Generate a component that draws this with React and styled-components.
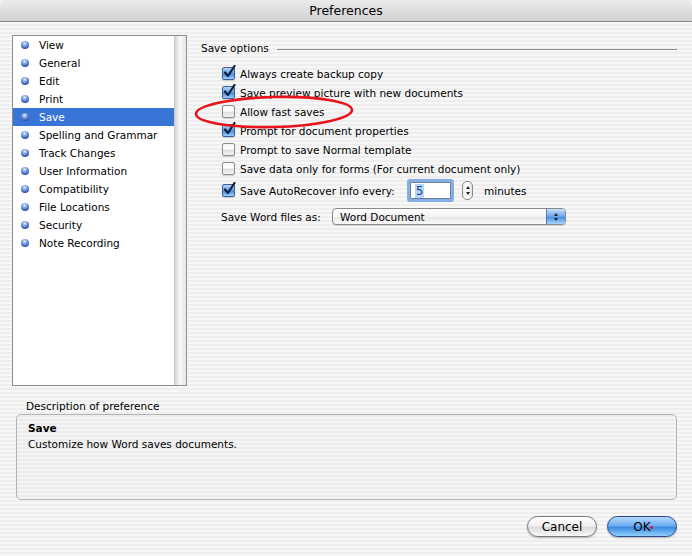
import styled, { createGlobalStyle } from 'styled-components';

const GlobalStyle = createGlobalStyle`
  html, body { margin:0; padding:0; }
  body {
    width:692px;
    height:556px;
    overflow:hidden;
    font-family:"DejaVu Sans", "Noto Sans", sans-serif;
    font-size:10.5px;
    color:#000;
  }
`;

const pinstripe = `repeating-linear-gradient(to bottom, #eeeeee 0px, #eeeeee 2px, #f7f7f7 2px, #f7f7f7 4px)`;

const Window = styled.div`
    width:692px;
    height:556px;
    display:flex;
    flex-direction:column;
    position:relative;
    background:${pinstripe};
`;

const TitleBar = styled.div`
    height:21px;
    border-bottom:1px solid #8a8a8a;
    border-radius:6px 6px 0 0;
    background:linear-gradient(#ebebeb, #d2d2d2);
    display:flex;
    align-items:center;
    justify-content:center;
    font-size:12.5px;
`;

const Body = styled.div`
    flex:1;
    display:flex;
    flex-direction:column;
    padding:13px 15px 0 12px;
`;

const Top = styled.div`
    display:flex;
    height:351px;
`;

const ListBox = styled.div`
    width:173px;
    height:349px;
    border:1px solid #8e8e8e;
    background:#fff;
    display:flex;
`;

const ListItems = styled.ul`
    list-style:none;
    margin:0;
    padding:0;
    flex:1;
`;

const ListItem = styled.li`
    height:18px;
    display:flex;
    align-items:center;
    padding-left:8px;
    gap:10px;
    background:${p => (p.$selected ? '#3875d7' : 'transparent')};
    color:${p => (p.$selected ? '#fff' : '#000')};
`;

const Bullet = styled.span`
    width:8px;
    height:8px;
    border-radius:50%;
    background:radial-gradient(circle at 45% 30%, #e0ebff 0, #7aa0e4 35%, #2b52a3 75%, #1a3470 100%);
`;

const ScrollTrack = styled.div`
    width:11px;
    border-left:1px solid #c9c9c9;
    background:linear-gradient(to right, #d4d4d4, #f9f9f9 45%, #e6e6e6);
`;

const Panel = styled.div`
    flex:1;
    margin-left:14px;
    display:flex;
    flex-direction:column;
`;

const SectionHead = styled.div`
    display:flex;
    align-items:center;
    gap:8px;
    height:14px;
    margin-top:6px;
`;

const Rule = styled.div`
    flex:1;
    height:1px;
    background:#8c8c8c;
    margin-top:3px;
`;

const Options = styled.div`
    display:flex;
    flex-direction:column;
    margin:9px 0 0 21px;
`;

const Row = styled.label`
    display:flex;
    align-items:center;
    gap:5px;
    height:${p => p.$h || 19}px;
`;

const Box = styled.span`
    width:11px;
    height:11px;
    border:1px solid ${p => (p.$checked ? '#3c5f95' : '#8d8d8d')};
    border-radius:2px;
    position:relative;
    background:${p =>
      p.$checked
        ? 'linear-gradient(#bcd8f8, #5a9be6 50%, #3d86dc 51%, #9fd0fb)'
        : 'linear-gradient(#f4f4f4, #ffffff 45%, #dedede 55%, #f4f4f4)'};
    box-shadow:0 1px 1px rgba(0,0,0,0.15);
    svg {
      position:absolute;
      left:0px;
      top:-3px;
    }
`;

const Check = () => (
  <svg width="13" height="14" viewBox="0 0 13 14">
    <path d="M2 7.5 L5 11 L11.5 1" fill="none" stroke="#0f1f3a" strokeWidth="2.2" strokeLinecap="round" strokeLinejoin="round" />
  </svg>
);

const CheckBox = ({ checked }) => <Box $checked={checked}>{checked && <Check />}</Box>;

const Label = styled.span`
    min-width:${p => p.$w || 0}px;
`;

const FieldRing = styled.div`
    width:41px;
    height:17px;
    border:1px solid #6f7f98;
    box-shadow:0 0 0 3px #85aee4;
    border-radius:1px;
    background:#fff;
    display:flex;
    align-items:center;
    padding-left:4px;
    box-sizing:border-box;
    margin:0 3px;
    font-size:11.5px;
`;

const Selected = styled.span`
    background:#b5d4fd;
    color:#1d3f7a;
    padding:0 1px;
`;

const Stepper = styled.div`
    width:9px;
    height:17px;
    border:1px solid #8a8a8a;
    border-radius:5px;
    background:linear-gradient(to right, #f0f0f0, #ffffff 50%, #e2e2e2);
    display:flex;
    flex-direction:column;
    align-items:center;
    justify-content:center;
    gap:3px;
    margin-left:3px;
`;

const Tri = styled.span`
    width:0;
    height:0;
    border-left:2.5px solid transparent;
    border-right:2.5px solid transparent;
    ${p => (p.$down ? 'border-top:3px solid #222;' : 'border-bottom:3px solid #222;')}
`;

const Minutes = styled.span`
    margin-left:6px;
`;

const PopRow = styled.div`
    display:flex;
    align-items:center;
    height:27px;
    margin-left:-1px;
`;

const Popup = styled.div`
    width:234px;
    height:17px;
    box-sizing:border-box;
    border:1px solid #8a8a8a;
    border-radius:4px;
    background:linear-gradient(#ffffff, #f3f3f3 50%, #e6e6e6 51%, #fafafa);
    display:flex;
    align-items:center;
    overflow:hidden;
    box-shadow:0 1px 1px rgba(0,0,0,0.12);
`;

const PopText = styled.span`
    flex:1;
    padding-left:7px;
`;

const PopCap = styled.div`
    width:18px;
    height:100%;
    border-left:1px solid #5578b0;
    background:linear-gradient(#c8e0fb, #6aa5ea 50%, #3f8ae0 51%, #a8d6fb);
    display:flex;
    flex-direction:column;
    align-items:center;
    justify-content:center;
    gap:2px;
`;

const DescLabel = styled.div`
    margin:13px 0 0 14px;
    height:14px;
    line-height:14px;
`;

const DescBox = styled.div`
    margin:1px 0 0 4px;
    height:79px;
    border:1px solid #b4b4b4;
    border-radius:5px;
    padding:5px 11px 0;
    line-height:16px;
    background:repeating-linear-gradient(to bottom, #ececec 0px, #ececec 2px, #f4f4f4 2px, #f4f4f4 4px);
`;

const DescTitle = styled.div`
    font-weight:bold;
`;

const Buttons = styled.div`
    display:flex;
    justify-content:flex-end;
    gap:10px;
    margin-top:16px;
`;

const Button = styled.button`
    width:70px;
    height:21px;
    border-radius:11px;
    font-family:inherit;
    font-size:12px;
    padding:0;
    position:relative;
    color:#000;
    border:1px solid ${p => (p.$primary ? '#29478a' : '#777')};
    background:${p =>
      p.$primary
        ? 'linear-gradient(#b7d9fb, #6eaef0 45%, #3d8ce4 55%, #8fcffb)'
        : 'linear-gradient(#ffffff, #f2f2f2 45%, #dcdcdc 55%, #f8f8f8)'};
    box-shadow:0 1px 2px rgba(0,0,0,0.25);
`;

const Cursor = styled.span`
    position:absolute;
    left:42px;
    top:9px;
    width:3px;
    height:3px;
    border-radius:50%;
    background:#e0101a;
`;

const Annotation = styled.svg`
    position:absolute;
    left:193px;
    top:95px;
    pointer-events:none;
`;

const items = [
  'View', 'General', 'Edit', 'Print', 'Save', 'Spelling and Grammar', 'Track Changes',
  'User Information', 'Compatibility', 'File Locations', 'Security', 'Note Recording',
];

const options = [
  { text: 'Always create backup copy', checked: true },
  { text: 'Save preview picture with new documents', checked: true },
  { text: 'Allow fast saves', checked: false },
  { text: 'Prompt for document properties', checked: true },
  { text: 'Prompt to save Normal template', checked: false },
  { text: 'Save data only for forms (For current document only)', checked: false },
];

export default function App() {
  return (
    <Window>
      <GlobalStyle />
      <TitleBar>Preferences</TitleBar>
      <Body>
        <Top>
          <ListBox>
            <ListItems>
              {items.map(name => (
                <ListItem key={name} $selected={name === 'Save'}>
                  <Bullet />
                  {name}
                </ListItem>
              ))}
            </ListItems>
            <ScrollTrack />
          </ListBox>
          <Panel>
            <SectionHead>
              Save options
              <Rule />
            </SectionHead>
            <Options>
              {options.map(o => (
                <Row key={o.text}>
                  <CheckBox checked={o.checked} />
                  {o.text}
                </Row>
              ))}
              <Row $h={25}>
                <CheckBox checked />
                <Label $w={162}>Save AutoRecover info every:</Label>
                <FieldRing><Selected>5</Selected></FieldRing>
                <Stepper><Tri /><Tri $down /></Stepper>
                <Minutes>minutes</Minutes>
              </Row>
              <PopRow>
                <Label $w={111}>Save Word files as:</Label>
                <Popup>
                  <PopText>Word Document</PopText>
                  <PopCap><Tri /><Tri $down /></PopCap>
                </Popup>
              </PopRow>
            </Options>
          </Panel>
        </Top>
        <DescLabel>Description of preference</DescLabel>
        <DescBox>
          <DescTitle>Save</DescTitle>
          <div>Customize how Word saves documents.</div>
        </DescBox>
        <Buttons>
          <Button>Cancel</Button>
          <Button $primary>OK<Cursor /></Button>
        </Buttons>
      </Body>
      <Annotation width="164" height="36" viewBox="0 0 164 36">
        <ellipse cx="81" cy="17" rx="78" ry="15" fill="none" stroke="#e8131b" strokeWidth="2.6" transform="rotate(-1.5 81 17)" />
      </Annotation>
    </Window>
  );
}
